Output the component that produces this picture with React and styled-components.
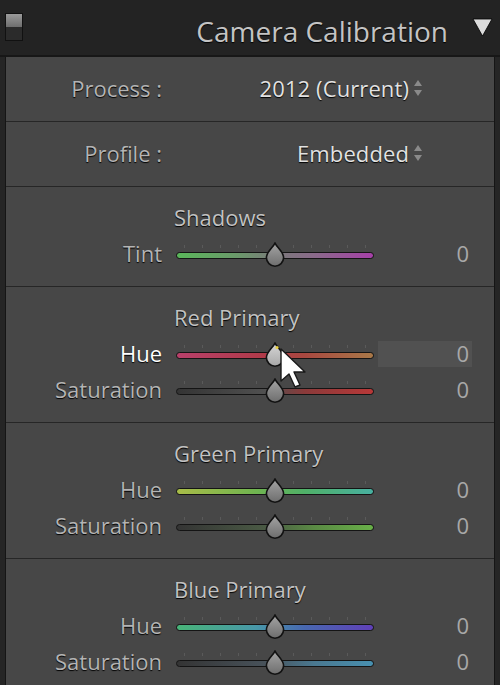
import React from 'react';
import styled, { createGlobalStyle } from 'styled-components';

const GlobalStyle = createGlobalStyle`
    html, body {
        margin: 0;
        padding: 0;
        background: #252525;
    }
    body {
        font-family: "Open Sans", "DejaVu Sans", sans-serif;
        -webkit-font-smoothing: antialiased;
    }
`;

const Page = styled.div`
    position: relative;
    width: 500px;
    height: 685px;
    overflow: hidden;
    background: #252525;
`;

const Header = styled.div`
    height: 55px;
    display: flex;
    align-items: center;
    padding: 0 7px 0 5px;
    background: #232323;
    border-bottom: 2px solid #171717;
`;

const PanelSwitch = styled.div`
    width: 16px;
    height: 26px;
    display: flex;
    flex-direction: column;
    border: 1px solid #111;
    margin-top: -2px;
`;

const SwitchHalf = styled.div`
    flex: 1;
    background: ${p => p.$on ? 'linear-gradient(#9a9a9a, #6e6e6e)' : '#2b2b2b'};
`;

const HeaderTitle = styled.div`
    flex: 1;
    text-align: right;
    font-size: 28px;
    color: #c4c4c4;
    padding-right: 24px;
    text-shadow: 0 1px 1px #000;
    margin-top: 6px;
`;

const Panel = styled.div`
    margin: 0 5px;
    background: #474747;
    border-left: 1px solid #151515;
    border-right: 1px solid #151515;
    min-height: 640px;
`;

const Section = styled.div`
    padding: 18px 0 14px;
    border-top: 1px solid #262626;
`;

const PopupRow = styled.div`
    height: ${p => p.$h}px;
    display: flex;
    align-items: center;
    padding-bottom: 2px;
    box-sizing: border-box;
    border-top: ${p => p.$first ? 'none' : '1px solid #262626'};
    font-size: 22px;
`;

const PopupLabel = styled.div`
    width: 156px;
    text-align: right;
    color: #b4b4b4;
    text-shadow: 0 1px 1px #000;
`;

const PopupValue = styled.div`
    width: 261px;
    display: flex;
    justify-content: flex-end;
    align-items: center;
    gap: 4px;
    color: #e2e2e2;
    text-shadow: 0 1px 1px #000;
    letter-spacing: 0.1px;
`;

const SectionTitle = styled.div`
    padding-left: 168px;
    font-size: 22px;
    line-height: 24px;
    margin-bottom: 7px;
    color: #c2c2c2;
    text-shadow: 0 1px 1px #000;
`;

const SliderRow = styled.div`
    height: 36px;
    display: flex;
    align-items: center;
    font-size: 22px;
`;

const RowLabel = styled.div`
    width: 156px;
    margin-right: 14px;
    padding-bottom: 2px;
    text-align: right;
    color: ${p => p.$active ? '#ffffff' : '#b4b4b4'};
    text-shadow: 0 1px 1px #000;
`;

const SliderBox = styled.div`
    position: relative;
    width: 198px;
    height: 36px;
`;

const Ticks = styled.div`
    position: absolute;
    left: 8px;
    right: 8px;
    top: 9px;
    display: flex;
    justify-content: space-between;
    span {
        width: 1px;
        height: 3px;
        background: #5a5a5a;
    }
`;

const Track = styled.div`
    position: absolute;
    left: 0;
    right: 0;
    top: 16px;
    height: 5px;
    border: 1.5px solid #141414;
    border-radius: 5px;
    background: ${p => p.$grad};
`;

const Thumb = styled.svg`
    position: absolute;
    left: 89px;
    top: 6px;
    width: 20px;
    height: 25px;
`;

const Value = styled.div`
    width: 94px;
    margin-left: 4px;
    height: 26px;
    display: flex;
    align-items: center;
    justify-content: flex-end;
    padding: 0 3px 2px 0;
    box-sizing: border-box;
    color: #a8a8a8;
    background: ${p => p.$active ? '#515151' : 'transparent'};
`;

const Cursor = styled.svg`
    position: absolute;
    left: 279px;
    top: 347px;
    width: 30px;
    height: 52px;
`;

const gradients = {
    tint: 'linear-gradient(90deg, #5ab65a 0%, #6a9a6a 30%, #7a7a7a 50%, #8a6a8a 70%, #a640a8 100%)',
    redHue: 'linear-gradient(90deg, #b8406a 0%, #b03a48 45%, #a84840 65%, #a87848 100%)',
    redSat: 'linear-gradient(90deg, #343434 0%, #505050 45%, #8a3a3a 65%, #b83838 100%)',
    greenHue: 'linear-gradient(90deg, #a8bc48 0%, #70b450 40%, #50b068 65%, #48b0a0 100%)',
    greenSat: 'linear-gradient(90deg, #343434 0%, #4a5a44 45%, #5a8a44 70%, #68b048 100%)',
    blueHue: 'linear-gradient(90deg, #48b478 0%, #4898a8 40%, #4868b0 65%, #6040b8 100%)',
    blueSat: 'linear-gradient(90deg, #343434 0%, #48525a 45%, #4a7890 70%, #4890b0 100%)',
};

const sections = [
    { title: 'Shadows', rows: [{ label: 'Tint', grad: gradients.tint }] },
    {
        title: 'Red Primary',
        rows: [
            { label: 'Hue', grad: gradients.redHue, active: true },
            { label: 'Saturation', grad: gradients.redSat },
        ],
    },
    {
        title: 'Green Primary',
        rows: [
            { label: 'Hue', grad: gradients.greenHue },
            { label: 'Saturation', grad: gradients.greenSat },
        ],
    },
    {
        title: 'Blue Primary',
        rows: [
            { label: 'Hue', grad: gradients.blueHue },
            { label: 'Saturation', grad: gradients.blueSat },
        ],
    },
];

const ThumbShape = ({ active }) => (
    <Thumb viewBox="0 0 20 25">
        <defs>
            <linearGradient id={active ? 'thA' : 'thN'} x1="0" y1="0" x2="0" y2="1">
                <stop offset="0" stopColor={active ? '#d6d6d6' : '#a4a4a4'} />
                <stop offset="1" stopColor={active ? '#a8a8a8' : '#6e6e6e'} />
            </linearGradient>
        </defs>
        <path
            d="M10 1.2 C12 5.5, 18.6 10, 18.6 15.6 A8.6 8.6 0 0 1 1.4 15.6 C1.4 10, 8 5.5, 10 1.2 Z"
            fill={`url(#${active ? 'thA' : 'thN'})`}
            stroke="#121212"
            strokeWidth="1.6"
        />
        {active && <circle cx="12" cy="5.5" r="1.6" fill="#e8d040" />}
    </Thumb>
);

const Slider = ({ grad, active }) => (
    <SliderBox>
        <Ticks>
            {Array.from({ length: 11 }).map((_, i) => <span key={i} />)}
        </Ticks>
        <Track $grad={grad} />
        <ThumbShape active={active} />
    </SliderBox>
);

const UpDown = () => (
    <svg width="10" height="18" viewBox="0 0 10 18">
        <path d="M5 1 L9 7 L1 7 Z" fill="#8a8a8a" />
        <path d="M5 17 L9 11 L1 11 Z" fill="#8a8a8a" />
    </svg>
);

export default function App() {
    return (
        <Page>
            <GlobalStyle />
            <Header>
                <PanelSwitch>
                    <SwitchHalf $on />
                    <SwitchHalf />
                </PanelSwitch>
                <HeaderTitle>Camera Calibration</HeaderTitle>
                <svg width="21" height="19" viewBox="0 0 21 19">
                    <path d="M1 1 L20 1 L10.5 18 Z" fill="#dcdcdc" stroke="#000" strokeWidth="0.8" />
                </svg>
            </Header>
            <Panel>
                <PopupRow $first $h={64}>
                    <PopupLabel>Process :</PopupLabel>
                    <PopupValue>2012 (Current) <UpDown /></PopupValue>
                </PopupRow>
                <PopupRow $h={65}>
                    <PopupLabel>Profile :</PopupLabel>
                    <PopupValue>Embedded <UpDown /></PopupValue>
                </PopupRow>
                {sections.map(section => (
                    <Section key={section.title}>
                        <SectionTitle>{section.title}</SectionTitle>
                        {section.rows.map(row => (
                            <SliderRow key={row.label}>
                                <RowLabel $active={row.active}>{row.label}</RowLabel>
                                <Slider grad={row.grad} active={row.active} />
                                <Value $active={row.active}>0</Value>
                            </SliderRow>
                        ))}
                    </Section>
                ))}
            </Panel>
            <Cursor viewBox="0 0 30 52">
                <path d="M2 2 L2 34 L10 27 L16 40 L21 38 L15 25 L26 25 Z" fill="#ffffff" stroke="#1a1a1a" strokeWidth="1.4" strokeLinejoin="round" />
            </Cursor>
        </Page>
    );
}
